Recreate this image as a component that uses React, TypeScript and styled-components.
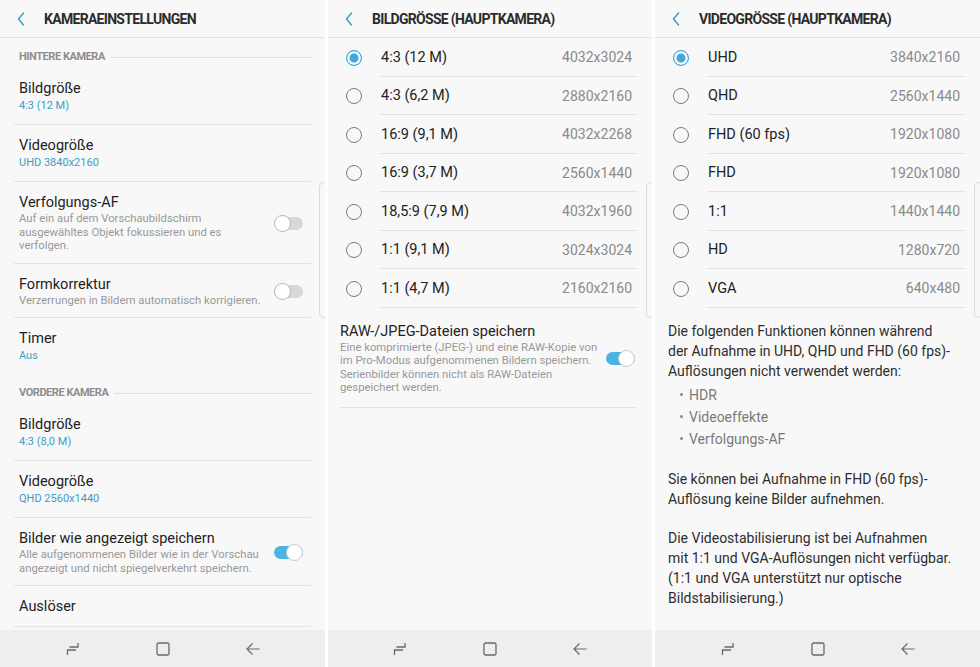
import React from "react";
import styled, { createGlobalStyle } from "styled-components";

const COLORS = {
  panel: "#f8f8f8",
  nav: "#eeeeee",
  line: "#e3e3e3",
  title: "#222222",
  header: "#2b2b2b",
  section: "#8e8e8e",
  accent: "#3b9dc6",
  toggleOn: "#4cb4e0",
  muted: "#999999",
  value: "#8a8a8a",
  icon: "#6a6a6a",
};

const GlobalStyle = createGlobalStyle`
  html, body {
    margin: 0;
    padding: 0;
    background: #ffffff;
  }
  body {
    font-family: Roboto, "Noto Sans", "Liberation Sans", sans-serif;
  }
`;

const imageSizes = [
  { label: "4:3 (12 M)", value: "4032x3024" },
  { label: "4:3 (6,2 M)", value: "2880x2160" },
  { label: "16:9 (9,1 M)", value: "4032x2268" },
  { label: "16:9 (3,7 M)", value: "2560x1440" },
  { label: "18,5:9 (7,9 M)", value: "4032x1960" },
  { label: "1:1 (9,1 M)", value: "3024x3024" },
  { label: "1:1 (4,7 M)", value: "2160x2160" },
];

const videoSizes = [
  { label: "UHD", value: "3840x2160" },
  { label: "QHD", value: "2560x1440" },
  { label: "FHD (60 fps)", value: "1920x1080" },
  { label: "FHD", value: "1920x1080" },
  { label: "1:1", value: "1440x1440" },
  { label: "HD", value: "1280x720" },
  { label: "VGA", value: "640x480" },
];

function BackChevron() {
  return (
    <svg width="8" height="14" viewBox="0 0 8 14">
      <polyline
        points="6.5,1 1.5,7 6.5,13"
        fill="none"
        stroke={COLORS.accent}
        strokeWidth="1.5"
        strokeLinecap="round"
        strokeLinejoin="round"
      />
    </svg>
  );
}

function RecentIcon() {
  return (
    <svg width="14" height="14" viewBox="0 0 14 14">
      <path
        d="M3.5 5 H12 V1 M10 8 H1.5 V13"
        fill="none"
        stroke={COLORS.icon}
        strokeWidth="1.3"
      />
    </svg>
  );
}

function HomeIcon() {
  return (
    <svg width="14" height="14" viewBox="0 0 14 14">
      <rect
        x="1"
        y="1"
        width="12"
        height="12"
        rx="1.6"
        fill="none"
        stroke={COLORS.icon}
        strokeWidth="1.3"
      />
    </svg>
  );
}

function BackIcon() {
  return (
    <svg width="14" height="14" viewBox="0 0 14 14">
      <path
        d="M1 7 H13.5 M6.5 1.5 L1 7 L6.5 12.5"
        fill="none"
        stroke={COLORS.icon}
        strokeWidth="1.2"
      />
    </svg>
  );
}

function Toggle({ on }: { on?: boolean }) {
  return (
    <Track $on={on}>
      <Knob $on={on} />
    </Track>
  );
}

function Phone({
  width,
  title,
  children,
}: {
  width: number;
  title: string;
  children: React.ReactNode;
}) {
  return (
    <PhoneFrame $width={width}>
      <Header>
        <BackChevron />
        <HeaderTitle>{title}</HeaderTitle>
      </Header>
      <Body>{children}</Body>
      <NavBar>
        <NavSlot>
          <RecentIcon />
        </NavSlot>
        <NavSlot>
          <HomeIcon />
        </NavSlot>
        <NavSlot>
          <BackIcon />
        </NavSlot>
      </NavBar>
      <EdgeHandle />
    </PhoneFrame>
  );
}

function Setting({
  title,
  value,
  desc,
  toggle,
  last,
}: {
  title: string;
  value?: string;
  desc?: React.ReactNode;
  toggle?: "on" | "off";
  last?: boolean;
}) {
  return (
    <SettingRow $last={last}>
      <SettingText>
        <SettingTitle>{title}</SettingTitle>
        {value && <SettingValue>{value}</SettingValue>}
        {desc && <SettingDesc>{desc}</SettingDesc>}
      </SettingText>
      {toggle && <Toggle on={toggle === "on"} />}
    </SettingRow>
  );
}

function RadioList({ items }: { items: { label: string; value: string }[] }) {
  return (
    <div>
      {items.map((item, i) => (
        <RadioRow key={item.label + item.value}>
          <RadioSlot>
            <Radio $checked={i === 0} />
          </RadioSlot>
          <RadioBody>
            <RadioLabel>{item.label}</RadioLabel>
            <RadioValue>{item.value}</RadioValue>
          </RadioBody>
        </RadioRow>
      ))}
    </div>
  );
}

export default function App(): React.ReactElement {
  return (
    <>
      <GlobalStyle />
      <Screens>
        <Phone width={325} title="KAMERAEINSTELLUNGEN">
          <SettingsList>
            <SectionHeader>HINTERE KAMERA</SectionHeader>
            <Setting title="Bildgröße" value="4:3 (12 M)" />
            <Setting title="Videogröße" value="UHD 3840x2160" />
            <Setting
              title="Verfolgungs-AF"
              toggle="off"
              desc={
                <>
                  Auf ein auf dem Vorschaubildschirm
                  <br />
                  ausgewähltes Objekt fokussieren und es
                  <br />
                  verfolgen.
                </>
              }
            />
            <Setting
              title="Formkorrektur"
              toggle="off"
              desc="Verzerrungen in Bildern automatisch korrigieren."
            />
            <Setting title="Timer" value="Aus" last />
            <SectionHeader>VORDERE KAMERA</SectionHeader>
            <Setting title="Bildgröße" value="4:3 (8,0 M)" />
            <Setting title="Videogröße" value="QHD 2560x1440" />
            <Setting
              title="Bilder wie angezeigt speichern"
              toggle="on"
              desc={
                <>
                  Alle aufgenommenen Bilder wie in der Vorschau
                  <br />
                  angezeigt und nicht spiegelverkehrt speichern.
                </>
              }
            />
            <Setting title="Auslöser" />
          </SettingsList>
        </Phone>

        <Phone width={324} title="BILDGRÖSSE (HAUPTKAMERA)">
          <RadioList items={imageSizes} />
          <RawSection>
            <SettingText>
              <SettingTitle>RAW-/JPEG-Dateien speichern</SettingTitle>
              <SettingDesc>
                Eine komprimierte (JPEG-) und eine RAW-Kopie von
                <br />
                im Pro-Modus aufgenommenen Bildern speichern.
                <br />
                Serienbilder können nicht als RAW-Dateien
                <br />
                gespeichert werden.
              </SettingDesc>
            </SettingText>
            <Toggle on />
          </RawSection>
        </Phone>

        <Phone width={325} title="VIDEOGRÖSSE (HAUPTKAMERA)">
          <RadioList items={videoSizes} />
          <Notes>
            <Paragraph>
              Die folgenden Funktionen können während
              <br />
              der Aufnahme in UHD, QHD und FHD (60 fps)-
              <br />
              Auflösungen nicht verwendet werden:
            </Paragraph>
            <BulletList>
              <Bullet>HDR</Bullet>
              <Bullet>Videoeffekte</Bullet>
              <Bullet>Verfolgungs-AF</Bullet>
            </BulletList>
            <Paragraph>
              Sie können bei Aufnahme in FHD (60 fps)-
              <br />
              Auflösung keine Bilder aufnehmen.
            </Paragraph>
            <Paragraph>
              Die Videostabilisierung ist bei Aufnahmen
              <br />
              mit 1:1 und VGA-Auflösungen nicht verfügbar.
              <br />
              (1:1 und VGA unterstützt nur optische
              <br />
              Bildstabilisierung.)
            </Paragraph>
          </Notes>
        </Phone>
      </Screens>
    </>
  );
}

const Screens = styled.div`
  display: flex;
  gap: 3px;
  width: 980px;
  height: 667px;
  background: #ffffff;
`;

const PhoneFrame = styled.div<{ $width: number }>`
  position: relative;
  width: ${(p) => p.$width}px;
  height: 667px;
  display: flex;
  flex-direction: column;
  background: ${COLORS.panel};
  overflow: hidden;
`;

const Header = styled.header`
  height: 37px;
  flex-shrink: 0;
  display: flex;
  align-items: center;
  gap: 19px;
  padding-left: 17px;
  border-bottom: 1px solid ${COLORS.line};
`;

const HeaderTitle = styled.h1`
  margin: 0;
  font-size: 14px;
  font-weight: 700;
  letter-spacing: -0.7px;
  color: ${COLORS.header};
`;

const Body = styled.main`
  flex: 1;
  overflow: hidden;
`;

const NavBar = styled.nav`
  height: 37px;
  flex-shrink: 0;
  display: grid;
  grid-template-columns: repeat(3, 90px);
  justify-content: center;
  align-items: center;
  background: ${COLORS.nav};
`;

const NavSlot = styled.div`
  display: flex;
  justify-content: center;
  align-items: center;
`;

const EdgeHandle = styled.div`
  position: absolute;
  top: 182px;
  right: -3px;
  width: 7px;
  height: 134px;
  border: 1px solid #dadada;
  border-radius: 5px;
  background: ${COLORS.panel};
`;

const SettingsList = styled.div`
  margin: 0 14px;
`;

const SectionHeader = styled.div`
  display: flex;
  align-items: center;
  gap: 6px;
  padding: 13px 0 5px 5px;
  font-size: 11px;
  line-height: 12px;
  font-weight: 700;
  letter-spacing: -0.45px;
  color: ${COLORS.section};

  &::after {
    content: "";
    flex: 1;
    height: 1px;
    background: #dedede;
  }
`;

const SettingRow = styled.div<{ $last?: boolean }>`
  display: flex;
  align-items: center;
  gap: 12px;
  padding: 12px 8px 10px 5px;
  border-bottom: ${(p) => (p.$last ? "none" : `1px solid ${COLORS.line}`)};
`;

const SettingText = styled.div`
  flex: 1;
  min-width: 0;
`;

const SettingTitle = styled.div`
  font-size: 14.5px;
  line-height: 18px;
  color: ${COLORS.title};
  white-space: nowrap;
`;

const SettingValue = styled.div`
  font-size: 11px;
  line-height: 16px;
  color: ${COLORS.accent};
`;

const SettingDesc = styled.div`
  font-size: 11.3px;
  line-height: 13.5px;
  color: ${COLORS.muted};
  white-space: nowrap;
`;

const Track = styled.span<{ $on?: boolean }>`
  position: relative;
  flex-shrink: 0;
  width: 29px;
  height: 13px;
  border-radius: 7px;
  background: ${(p) => (p.$on ? COLORS.toggleOn : "#d8d8d8")};
`;

const Knob = styled.span<{ $on?: boolean }>`
  position: absolute;
  top: -2px;
  left: ${(p) => (p.$on ? "12px" : "0")};
  width: 17px;
  height: 17px;
  box-sizing: border-box;
  border-radius: 50%;
  background: #ffffff;
  border: 1px solid ${(p) => (p.$on ? "#c9c9c9" : "#b5b5b5")};
`;

const RadioRow = styled.div`
  display: flex;
  align-items: stretch;
  height: 38.5px;
`;

const RadioSlot = styled.div`
  width: 52px;
  flex-shrink: 0;
  display: flex;
  align-items: center;
  padding-left: 18px;
  padding-top: 1px;
  box-sizing: border-box;
`;

const Radio = styled.span<{ $checked?: boolean }>`
  width: 16px;
  height: 16px;
  box-sizing: border-box;
  border-radius: 50%;
  border: ${(p) => (p.$checked ? "1.5px solid #3da8dc" : "1.3px solid #7a7a7a")};
  background: ${(p) => (p.$checked ? "#3da8dc" : "transparent")};
  box-shadow: ${(p) => (p.$checked ? `inset 0 0 0 2.5px ${COLORS.panel}` : "none")};
`;

const RadioBody = styled.div`
  flex: 1;
  display: flex;
  align-items: center;
  justify-content: space-between;
  margin-right: 14px;
  padding: 1px 6px 0 1px;
  border-bottom: 1px solid ${COLORS.line};
`;

const RadioLabel = styled.span`
  font-size: 14.5px;
  color: ${COLORS.title};
`;

const RadioValue = styled.span`
  font-size: 14px;
  color: ${COLORS.value};
`;

const RawSection = styled.div`
  display: flex;
  align-items: center;
  gap: 10px;
  margin: 0 15px 0 12px;
  padding: 15px 2px 12px 0;
  border-bottom: 1px solid ${COLORS.line};
`;

const Notes = styled.div`
  padding: 13px 13px 0;
  display: flex;
  flex-direction: column;
  gap: 19px;
`;

const Paragraph = styled.p`
  margin: 0;
  font-size: 14px;
  line-height: 20px;
  color: #2e2e2e;
  white-space: nowrap;
`;

const BulletList = styled.ul`
  list-style: none;
  margin: -16px 0 0;
  padding: 0 0 0 12px;
`;

const Bullet = styled.li`
  display: flex;
  align-items: center;
  gap: 6px;
  font-size: 14px;
  line-height: 22px;
  color: #7a7a7a;

  &::before {
    content: "";
    width: 3px;
    height: 3px;
    border-radius: 50%;
    background: #8a8a8a;
  }
`;
